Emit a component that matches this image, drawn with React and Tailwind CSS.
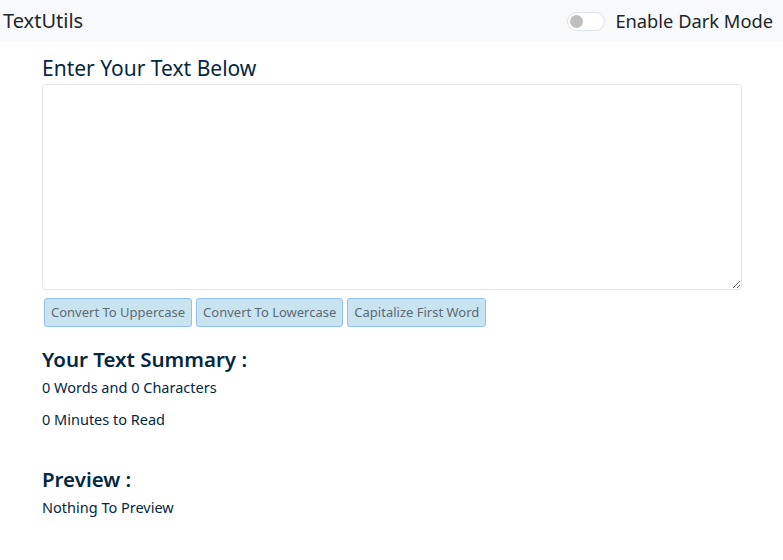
import React, { useState } from 'react';

const App = () => {
    const [text, setText] = useState('');
    const [dark, setDark] = useState(false);

    const words = text.split(/\s+/).filter(w => w.length !== 0).length;

    return (
        <div className="min-h-[560px] bg-white text-[#042743]" style={{ fontFamily: '"Noto Sans", sans-serif' }}>
            {/* navbar */}
            <nav className="h-[42px] bg-[#f8f9fa] flex items-center justify-between pl-[3px] pr-[10px]">
                <span className="text-[20px] text-[#212529] leading-none">TextUtils</span>
                <label className="flex items-center gap-[10px] cursor-pointer">
                    <button
                        onClick={() => setDark(!dark)}
                        className="w-[38px] h-[19px] rounded-full border border-[#dee2e6] bg-white flex items-center px-[2px]"
                    >
                        <span className="w-[13px] h-[13px] rounded-full bg-[#bfbfbf]"></span>
                    </button>
                    <span className="text-[18.3px] text-[#212529] leading-none">Enable Dark Mode</span>
                </label>
            </nav>

            <div className="px-[42px] w-[783px]">
                <h1 className="text-[21px] leading-none mt-[16px] mb-[5px]">Enter Your Text Below</h1>
                <textarea
                    value={text}
                    onChange={e => setText(e.target.value)}
                    className="block w-[700px] h-[206px] border border-[#e4e6e8] rounded-[4px] outline-none px-3 py-2"
                ></textarea>

                <div className="flex gap-[4px] mt-[8px] ml-[2px]">
                    <button className="h-[29px] px-[6px] text-[13px] text-[#5c6a74] bg-[#c9e4f1] border border-[#93c0ee] rounded-[3px]">Convert To Uppercase</button>
                    <button className="h-[29px] px-[6px] text-[13px] text-[#5c6a74] bg-[#c9e4f1] border border-[#93c0ee] rounded-[3px]">Convert To Lowercase</button>
                    <button className="h-[29px] px-[6px] text-[13px] text-[#5c6a74] bg-[#c9e4f1] border border-[#93c0ee] rounded-[3px]">Capitalize First Word</button>
                </div>

                <h2 className="text-[20.5px] font-semibold leading-none mt-[22px]">Your Text Summary :</h2>
                <p className="text-[14.5px] mt-[7px]">{words} Words and {text.length} Characters</p>
                <p className="text-[14.5px] mt-[11px]">{0.008 * words} Minutes to Read</p>

                <h2 className="text-[20.5px] font-semibold leading-none mt-[38px]">Preview :</h2>
                <p className="text-[14.5px] mt-[7px]">{text.length > 0 ? text : 'Nothing To Preview'}</p>
            </div>
        </div>
    );
};

export default App;
